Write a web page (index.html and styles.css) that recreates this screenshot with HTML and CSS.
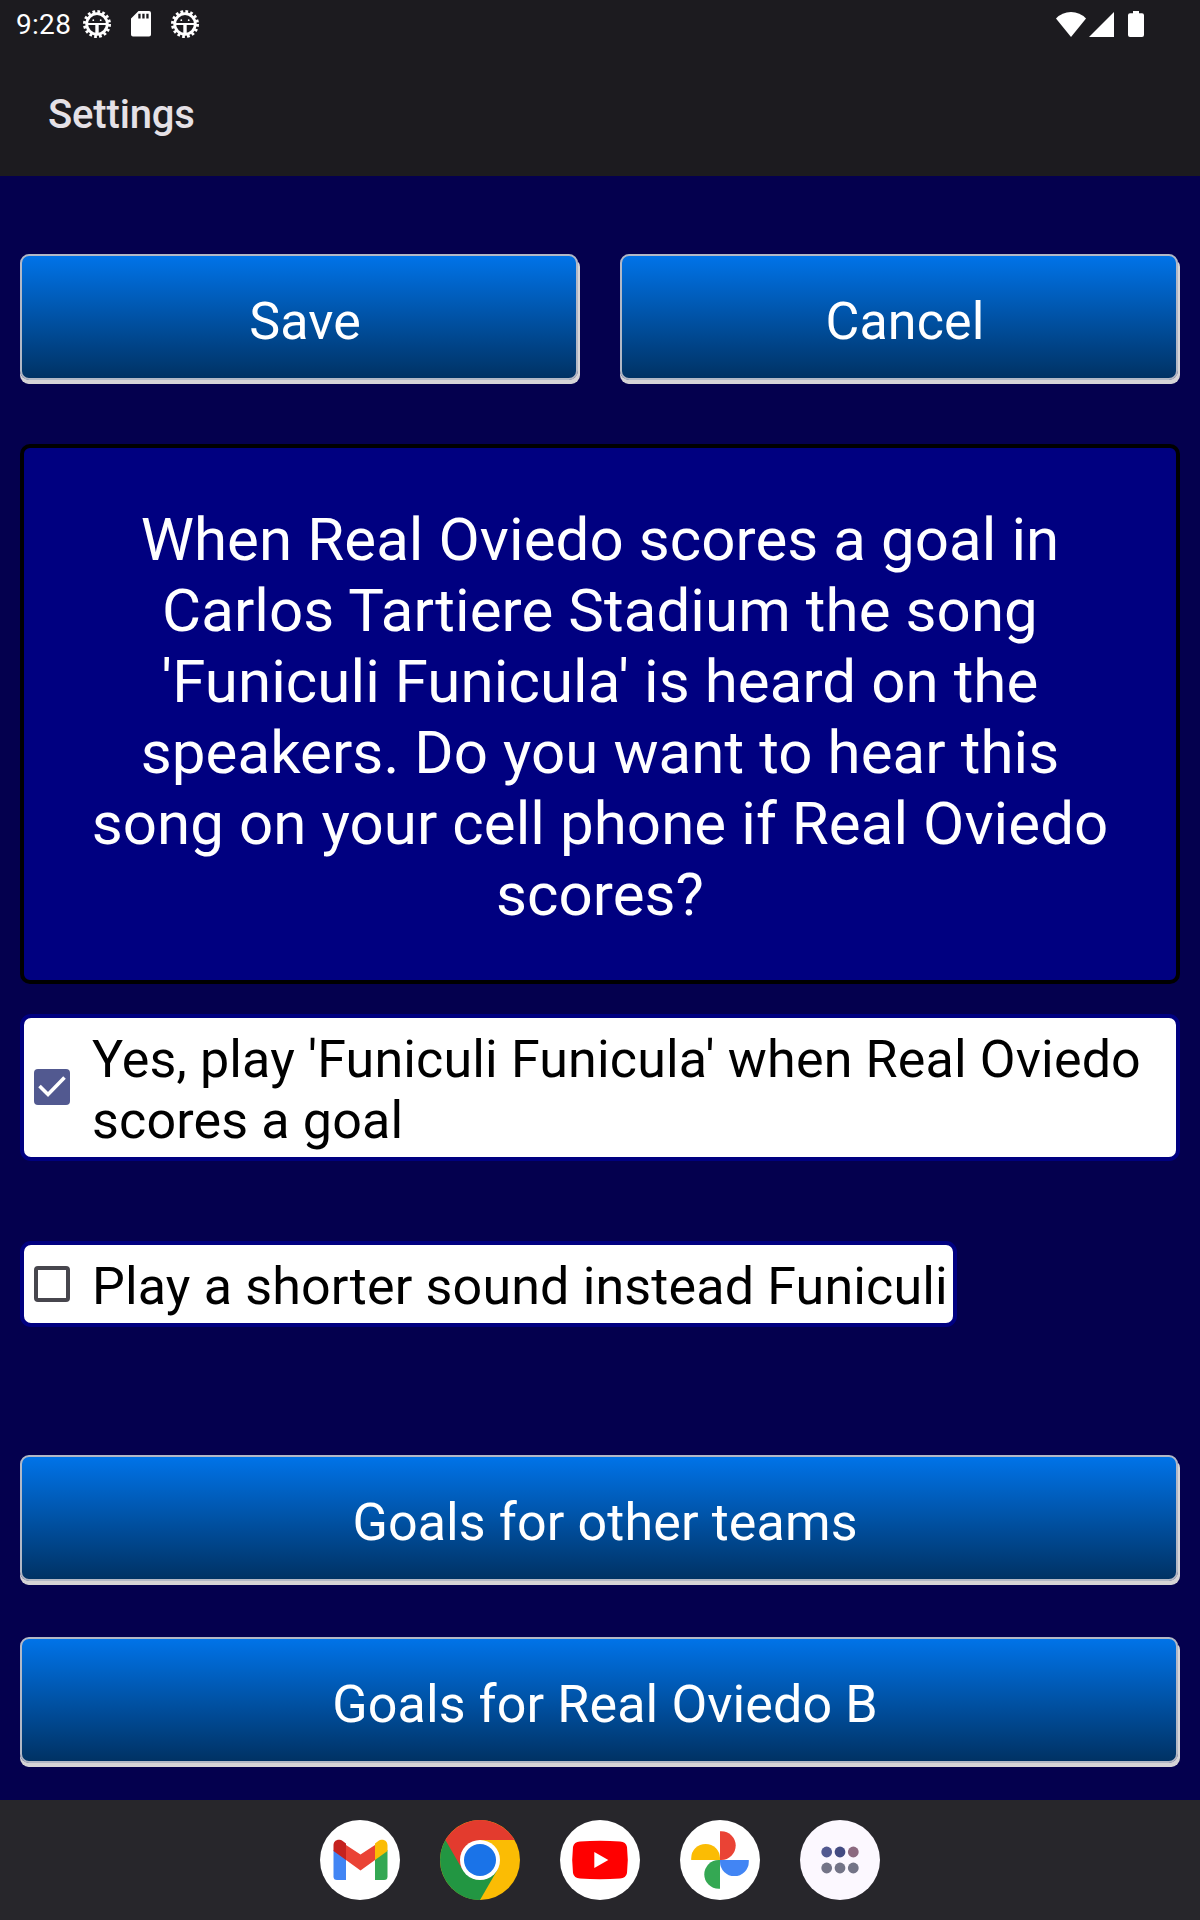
FILE: index.html
```html
<!DOCTYPE html>
<html lang="en">
<head>
    <meta charset="UTF-8">
    <meta name="viewport" content="width=device-width, initial-scale=1.0">
    <title>Settings</title>
    <link rel="stylesheet" href="styles.css">
</head>
<body>
    <!-- Reusable status icon -->
    <svg width="0" height="0" class="defs">
        <symbol id="gear" viewBox="0 0 28 28">
            <circle cx="14" cy="14" r="12.4" fill="none" stroke="#fff" stroke-width="3.2" stroke-dasharray="2.7 2.17"/>
            <circle cx="14" cy="14" r="10.3" fill="none" stroke="#fff" stroke-width="2.8"/>
            <path d="M4 14H24" fill="none" stroke="#fff" stroke-width="2"/>
            <path d="M14 14V25" fill="none" stroke="#fff" stroke-width="3.4"/>
            <circle cx="10.3" cy="10.2" r=".9" fill="#fff"/>
            <circle cx="17.7" cy="10.2" r=".9" fill="#fff"/>
        </symbol>
    </svg>

    <header class="app-bar">
        <div class="status-bar">
            <span class="clock">9:28</span>
            <svg class="icon-gear" width="28" height="28"><use href="#gear"/></svg>
            <svg class="icon-sd" width="20" height="26" viewBox="0 0 20 26">
                <path fill="#fff" fill-rule="evenodd" d="M7.5 0H18Q20 0 20 2V23.5Q20 25.5 18 25.5H2Q0 25.5 0 23.5V7.5ZM7.3 2.8V7.5H9.6V2.8ZM11.3 2.8V7.5H13.6V2.8ZM15.3 2.8V7.5H17.6V2.8Z"/>
            </svg>
            <svg class="icon-gear" width="28" height="28"><use href="#gear"/></svg>
            <div class="status-right">
                <svg width="30" height="25" viewBox="0 0 30 25"><path fill="#fff" d="M0 6.5Q6 0 15 0T30 6.5L15 25Z"/></svg>
                <svg width="25" height="25" viewBox="0 0 25 25"><path fill="#fff" d="M25 0V25H0Z"/></svg>
                <svg class="icon-battery" width="16" height="26" viewBox="0 0 16 26"><path fill="#fff" d="M5 0H11V2.3H14Q16 2.3 16 4.3V24Q16 26 14 26H2Q0 26 0 24V4.3Q0 2.3 2 2.3H5Z"/></svg>
            </div>
        </div>
        <h1>Settings</h1>
    </header>

    <main>
        <div class="button-row">
            <button class="btn">Save</button>
            <button class="btn">Cancel</button>
        </div>

        <p class="question">When Real Oviedo scores a goal in Carlos Tartiere Stadium the song 'Funiculi Funicula' is heard on the speakers. Do you want to hear this song on your cell phone if Real Oviedo scores?</p>

        <label class="option">
            <svg class="box" width="36" height="36" viewBox="0 0 36 36">
                <rect width="36" height="36" rx="4" fill="#525990"/>
                <path d="M5.5 17L14 25.5L30.5 8.5" fill="none" stroke="#fff" stroke-width="3.6"/>
            </svg>
            <span>Yes, play 'Funiculi Funicula' when Real Oviedo scores a goal</span>
        </label>

        <label class="option option-short">
            <svg class="box" width="36" height="36" viewBox="0 0 36 36">
                <rect x="2" y="2" width="32" height="32" rx="2" fill="none" stroke="#47464d" stroke-width="4"/>
            </svg>
            <span>Play a shorter sound instead Funiculi</span>
        </label>

        <div class="team-buttons">
            <button class="btn">Goals for other teams</button>
            <button class="btn">Goals for Real Oviedo B</button>
        </div>
    </main>

    <nav class="dock">
        <!-- Gmail -->
        <svg class="app" viewBox="0 0 80 80">
            <circle cx="40" cy="40" r="40" fill="#fff"/>
            <path fill="#4285f4" d="M13.5 30L26 38V60H17Q13.5 60 13.5 56.5Z"/>
            <path fill="#34a853" d="M67.5 30L55 38V60H64Q67.5 60 67.5 56.5Z"/>
            <path fill="#ea4335" d="M26 25L40.5 34.5L55 25V40L40.5 50.5L26 40Z"/>
            <path fill="#c5221f" d="M13.5 31V25.5C13.5 20 19 18 23 21.2L26 23.5V40Z"/>
            <path fill="#fbbc04" d="M67.5 31V25.5C67.5 20 62 18 58 21.2L55 23.5V40Z"/>
        </svg>
        <!-- Chrome -->
        <svg class="app" viewBox="0 0 80 80">
            <circle cx="40" cy="40" r="40" fill="#fbbc04"/>
            <path fill="#229642" d="M5.4 20A40 40 0 0 0 40 80L57.3 50L40 40Z"/>
            <path fill="#e33b2e" d="M5.4 20A40 40 0 0 1 74.6 20H40L22.7 50Z"/>
            <circle cx="40" cy="40" r="20" fill="#fff"/>
            <circle cx="40" cy="40" r="16" fill="#1a73e8"/>
        </svg>
        <!-- YouTube -->
        <svg class="app" viewBox="0 0 80 80">
            <circle cx="40" cy="40" r="40" fill="#fff"/>
            <path fill="#f00" d="M20 21.4Q40 20 60 21.4Q66 21.8 67 27Q68.6 40 67 53Q66 58.2 60 58.6Q40 60 20 58.6Q14 58.2 13 53Q11.4 40 13 27Q14 21.8 20 21.4Z"/>
            <path fill="#fff" d="M34.3 32V48L48.3 40Z"/>
        </svg>
        <!-- Photos -->
        <svg class="app" viewBox="0 0 80 80">
            <circle cx="40" cy="40" r="40" fill="#fff"/>
            <path fill="#fbbc04" d="M11.2 40V38.3A14.4 14.4 0 0 1 40 38.3V40Z"/>
            <path fill="#ea4335" d="M40 11.2H41.3A14.4 14.4 0 0 1 41.3 40H40Z"/>
            <path fill="#4285f4" d="M40 40H68.8V41.7A14.4 14.4 0 0 1 40 41.7Z"/>
            <path fill="#34a853" d="M40 40V68.8H38.7A14.4 14.4 0 0 1 38.7 40Z"/>
        </svg>
        <!-- All apps -->
        <svg class="app" viewBox="0 0 80 80">
            <circle cx="40" cy="40" r="40" fill="#fcf8ff"/>
            <circle cx="26.7" cy="32" r="5.4" fill="#525990"/>
            <circle cx="40" cy="32" r="5.4" fill="#434b82"/>
            <circle cx="53.3" cy="32" r="5.4" fill="#8c6a80"/>
            <circle cx="26.7" cy="48" r="5.4" fill="#737487"/>
            <circle cx="40" cy="48" r="5.4" fill="#737487"/>
            <circle cx="53.3" cy="48" r="5.4" fill="#737487"/>
        </svg>
    </nav>
</body>
</html>
```
FILE: styles.css
```css
* {
    box-sizing: border-box;
}

body {
    margin: 0;
    height: 1920px;
    display: flex;
    flex-direction: column;
    font-family: Roboto, sans-serif;
    background: #04004e;
    overflow: hidden;
}

svg {
    display: block;
    flex-shrink: 0;
}

.defs {
    position: absolute;
}

.app-bar {
    height: 176px;
    background: #1c1b1f;
}

.status-bar {
    display: flex;
    align-items: center;
    height: 48px;
    padding: 0 56px 0 16px;
    color: #fff;
}

.clock {
    width: 67px;
    font-size: 28px;
    letter-spacing: 0.3px;
    line-height: 48px;
    padding-top: 2px;
}

.icon-sd {
    margin: 0 20px;
}

.status-right {
    display: flex;
    align-items: center;
    margin-left: auto;
    gap: 3px;
}

.icon-battery {
    margin-left: 11px;
}

h1 {
    margin: 0;
    padding: 43px 0 0 48px;
    color: #e5e1e6;
    font-size: 40px;
    font-weight: 500;
    letter-spacing: -0.15px;
    line-height: 47px;
}

main {
    flex: 1;
    padding: 78px 20px 0;
}

.button-row {
    display: grid;
    grid-template-columns: 1fr 1fr;
    gap: 42px;
    padding-right: 2px;
}

.btn {
    height: 126px;
    padding: 8px 0 0 12px;
    border: 2px solid #b2b8c6;
    border-radius: 9px;
    background: linear-gradient(#0073e8, #003264);
    box-shadow: 0 4px 0 #d6d4d6, 2px 4px 0 #d6d4d6;
    color: #fff;
    font-family: inherit;
    font-size: 52px;
    letter-spacing: 0.12px;
    line-height: 61px;
}

.question {
    height: 540px;
    margin: 64px 0 30px;
    padding: 56px 59px 0;
    border: 4px solid #000;
    border-radius: 10px;
    background: #000080;
    color: #fff;
    font-size: 60px;
    letter-spacing: 0.08px;
    line-height: 71px;
    text-align: center;
}

.option {
    display: flex;
    align-items: center;
    width: 1160px;
    height: 147px;
    padding-left: 10px;
    border: 4px solid #000080;
    border-radius: 11px;
    background: #fff;
    color: #000;
    font-size: 52px;
    letter-spacing: 0.16px;
    line-height: 61px;
}

.option .box {
    margin-bottom: 1px;
}

.option span {
    margin-left: 22px;
    padding-top: 5px;
}

.option-short {
    width: 937px;
    height: 86px;
    margin-top: 80px;
    white-space: nowrap;
}

.team-buttons {
    display: grid;
    gap: 56px;
    margin-top: 128px;
    padding-right: 2px;
}

.dock {
    display: flex;
    justify-content: center;
    align-items: center;
    gap: 40px;
    height: 120px;
    background: #27262b;
}

.app {
    width: 80px;
    height: 80px;
}
```
